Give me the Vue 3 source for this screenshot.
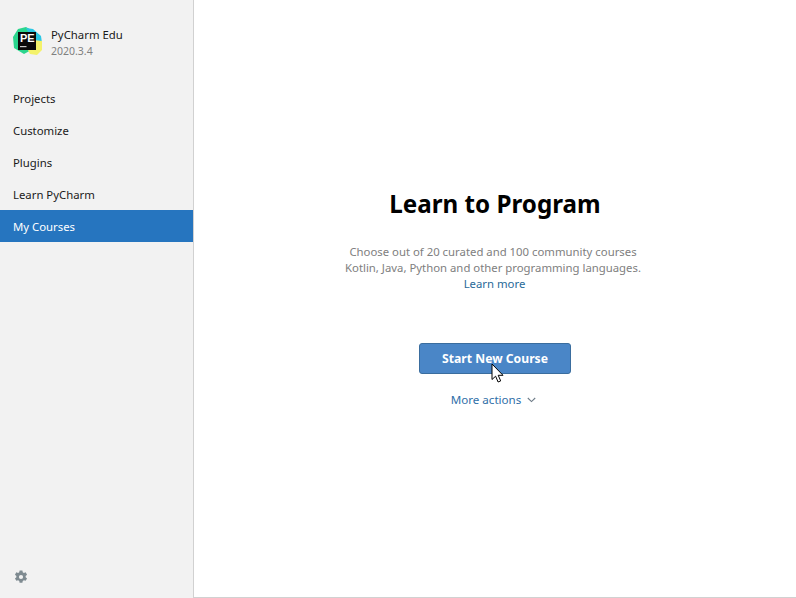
<template>
  <div class="welcome">
    <aside class="sidebar">
      <div class="brand">
        <svg class="logo" width="32" height="32" viewBox="0 0 32 32">
          <polygon points="6,2 14,0 21,4 21,22 12,27 2,21 1,10" fill="#2bd58d" />
          <polygon points="14,1 21,2 29,9 30,16 21,15" fill="#2cc7e4" />
          <polygon points="30,14 30,23 25,28 18,27 16,23 22,13" fill="#f4f26a" />
          <rect x="6" y="5" width="18" height="18" fill="#0a0a0a" />
          <text x="8" y="15.2" class="logo-text">PE</text>
          <rect x="8" y="19" width="6.5" height="1.2" fill="#c8c8c8" />
        </svg>
        <div>
          <div class="name">PyCharm Edu</div>
          <div class="version">2020.3.4</div>
        </div>
      </div>
      <nav class="nav">
        <a
          v-for="item in items"
          :key="item"
          :class="['nav-item', { active: item === current }]"
        >{{ item }}</a>
      </nav>
      <svg class="gear" width="14" height="14" viewBox="0 0 14 14">
        <path
          fill="#7f8b91"
          fill-rule="evenodd"
          d="M5.6 0.5h2.8l.35 1.8 1.15.65 1.75-.6 1.4 2.4-1.4 1.2v1.3l1.4 1.2-1.4 2.4-1.75-.6-1.15.65-.35 1.8H5.6l-.35-1.8-1.15-.65-1.75.6-1.4-2.4 1.4-1.2v-1.3l-1.4-1.2 1.4-2.4 1.75.6 1.15-.65zM7 4.9a2.1 2.1 0 1 0 0 4.2 2.1 2.1 0 0 0 0-4.2z"
        />
      </svg>
    </aside>

    <main class="main">
      <h1 class="title">Learn to Program</h1>
      <p class="desc">
        Choose out of 20 curated and 100 community courses<br />
        Kotlin, Java, Python and other programming languages.<br />
        <a class="link">Learn more</a>
      </p>
      <button class="start" type="button">
        Start New Course
        <svg class="cursor" width="13" height="20" viewBox="0 0 13 20">
          <path
            d="M1 1v15.5l3.6-3.3 2.5 5.8 2.6-1.1-2.5-5.6h4.8z"
            fill="#fff"
            stroke="#000"
            stroke-width="1"
          />
        </svg>
      </button>
      <a class="more">
        More actions
        <svg width="9" height="6" viewBox="0 0 9 6">
          <path d="M0.8 1l3.7 3.6L8.2 1" fill="none" stroke="#6e7c88" stroke-width="1.1" />
        </svg>
      </a>
    </main>
  </div>
</template>

<script setup>
const items = ['Projects', 'Customize', 'Plugins', 'Learn PyCharm', 'My Courses'];
const current = 'My Courses';
</script>

<style scoped>
.welcome {
  display: flex;
  height: 598px;
  font-family: "Noto Sans", "Open Sans", sans-serif;
  font-size: 11.35px;
  color: #1a1a1a;
  background: #fff;
}

.sidebar {
  position: relative;
  width: 193px;
  flex-shrink: 0;
  background: #f2f2f2;
  border-right: 1px solid #d1d1d1;
}

.brand {
  display: flex;
  align-items: center;
  gap: 7px;
  height: 82px;
  padding: 4px 0 0 12px;
  box-sizing: border-box;
}

.logo-text {
  font-family: "Liberation Sans", sans-serif;
  font-size: 11px;
  font-weight: 700;
  fill: #fff;
}

.name {
  line-height: 16px;
}

.version {
  font-size: 10.5px;
  line-height: 16px;
  color: #808080;
}

.nav-item {
  display: block;
  height: 32px;
  line-height: 34px;
  padding-left: 13px;
}

.nav-item.active {
  background: #2675bf;
  color: #fff;
}

.gear {
  position: absolute;
  left: 14px;
  bottom: 14px;
}

.main {
  flex: 1;
  display: flex;
  flex-direction: column;
  align-items: center;
  padding-top: 187px;
  box-sizing: border-box;
  border-bottom: 1px solid #d1d1d1;
}

.title {
  margin: 0;
  font-size: 24.2px;
  line-height: 34px;
  font-weight: 700;
  color: #000;
}

.desc {
  margin: 23px 4px 0 0;
  line-height: 16px;
  text-align: center;
  color: #808080;
}

.link {
  margin-left: 3px;
  color: #2a6a99;
}

.start {
  position: relative;
  width: 152px;
  height: 31px;
  margin-top: 51px;
  padding: 0;
  border: 1px solid #3a6d9e;
  border-radius: 3px;
  background: #4a86c7;
  color: #fff;
  font: inherit;
  font-size: 12.2px;
  font-weight: 700;
}

.cursor {
  position: absolute;
  left: 71px;
  top: 19px;
}

.more {
  display: flex;
  align-items: center;
  gap: 6px;
  margin: 18px 3px 0 0;
  font-size: 11.6px;
  line-height: 16px;
  color: #2f6fa8;
}
</style>
